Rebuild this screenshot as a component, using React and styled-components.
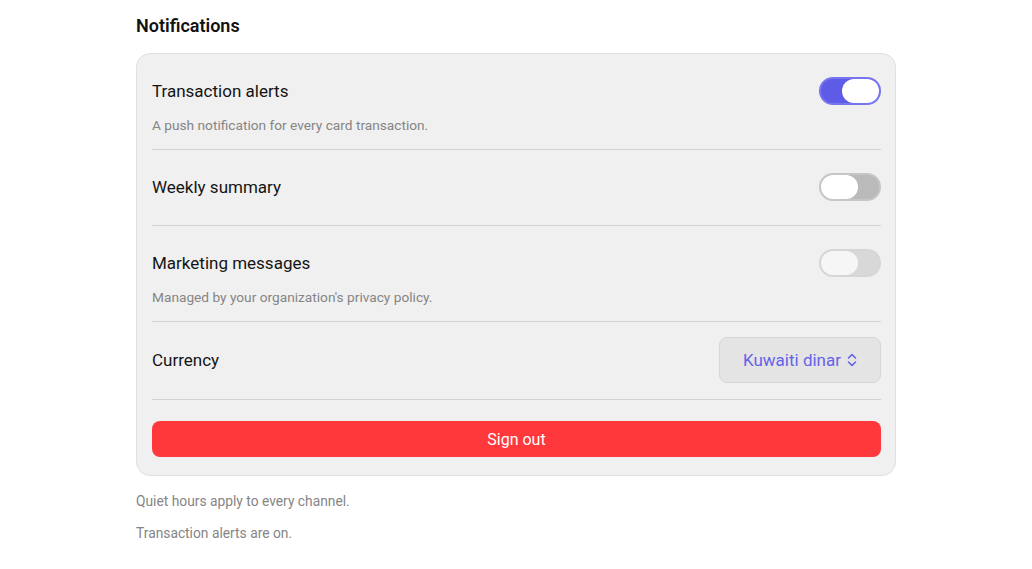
import styled, { createGlobalStyle } from "styled-components";

const GlobalStyle = createGlobalStyle`
  html, body {
    margin: 0;
    padding: 0;
    background: #ffffff;
    font-family: Roboto, Inter, "Noto Sans", "Liberation Sans", sans-serif;
    color: #111111;
  }
`;

const Page = styled.div`
  width: 760px;
  margin: 0 auto;
  padding-top: 14px;
`;

const Heading = styled.h2`
  margin: 0 0 15px 0;
  font-size: 18px;
  font-weight: 600;
  line-height: 24px;
`;

const Card = styled.div`
  background: #f0f0f0;
  border: 1px solid #e0e0e0;
  border-radius: 14px;
  padding: 0 14px 18px 15px;
`;

const Row = styled.div`
  padding: 15px 0 16px;
  border-bottom: 1px solid #d4d4d4;
`;

const RowHead = styled.div`
  display: flex;
  align-items: center;
  justify-content: space-between;
  min-height: 44px;
`;

const Label = styled.div`
  font-size: 17px;
  line-height: 22px;
  color: #141414;
`;

const Hint = styled.div`
  margin: 2px 0 -2px;
  font-size: 13.7px;
  line-height: 20px;
  color: #858585;
`;

const Track = styled.button`
  width: 62px;
  height: 28px;
  padding: 0;
  border-radius: 14px;
  border: 2px solid ${(p) => (p.$on ? "#7674ee" : p.$disabled ? "#d6d6d6" : "#c6c6c6")};
  background: ${(p) => (p.$on ? "#5e5ce6" : p.$disabled ? "#d8d8d8" : "#bababa")};
  display: flex;
  align-items: center;
  justify-content: ${(p) => (p.$on ? "flex-end" : "flex-start")};
  cursor: ${(p) => (p.$disabled ? "default" : "pointer")};
`;

const Knob = styled.span`
  width: 37px;
  height: 24px;
  border-radius: 12px;
  background: ${(p) => (p.$disabled ? "#f6f6f6" : "#ffffff")};
`;

const Toggle = ({ on, disabled }) => (
  <Track $on={on} $disabled={disabled} disabled={disabled} aria-pressed={on}>
    <Knob $disabled={disabled} />
  </Track>
);

const Select = styled.button`
  display: flex;
  align-items: center;
  justify-content: center;
  gap: 6px;
  height: 46px;
  width: 162px;
  background: #e4e4e4;
  border: 1px solid #d6d6d6;
  border-radius: 8px;
  font-family: inherit;
  font-size: 17px;
  color: #6462e8;
  padding: 0 14px;
`;

const SignOut = styled.button`
  display: block;
  width: 100%;
  height: 36px;
  margin-top: 21px;
  border: none;
  border-radius: 8px;
  background: #ff383c;
  color: #ffffff;
  font-family: inherit;
  font-size: 16px;
  font-weight: 400;
`;

const Footer = styled.p`
  margin: 0;
  font-size: 13.8px;
  line-height: 20px;
  color: #858585;
  padding-top: ${(p) => p.$gap}px;
`;

const Chevron = () => (
  <svg width="10" height="14" viewBox="0 0 10 14" fill="none">
    <path d="M1.5 5 L5 1.5 L8.5 5" stroke="#6462e8" strokeWidth="1.6" strokeLinecap="round" strokeLinejoin="round" />
    <path d="M1.5 9 L5 12.5 L8.5 9" stroke="#6462e8" strokeWidth="1.6" strokeLinecap="round" strokeLinejoin="round" />
  </svg>
);

export default function App() {
  return (
    <>
      <GlobalStyle />
      <Page>
        <Heading>Notifications</Heading>
        <Card>
          <Row>
            <RowHead>
              <Label>Transaction alerts</Label>
              <Toggle on />
            </RowHead>
            <Hint>A push notification for every card transaction.</Hint>
          </Row>
          <Row>
            <RowHead>
              <Label>Weekly summary</Label>
              <Toggle />
            </RowHead>
          </Row>
          <Row>
            <RowHead>
              <Label>Marketing messages</Label>
              <Toggle disabled />
            </RowHead>
            <Hint>Managed by your organization's privacy policy.</Hint>
          </Row>
          <Row>
            <RowHead>
              <Label>Currency</Label>
              <Select>
                Kuwaiti dinar <Chevron />
              </Select>
            </RowHead>
          </Row>
          <SignOut>Sign out</SignOut>
        </Card>
        <Footer $gap={15}>Quiet hours apply to every channel.</Footer>
        <Footer $gap={12}>Transaction alerts are on.</Footer>
      </Page>
    </>
  );
}
